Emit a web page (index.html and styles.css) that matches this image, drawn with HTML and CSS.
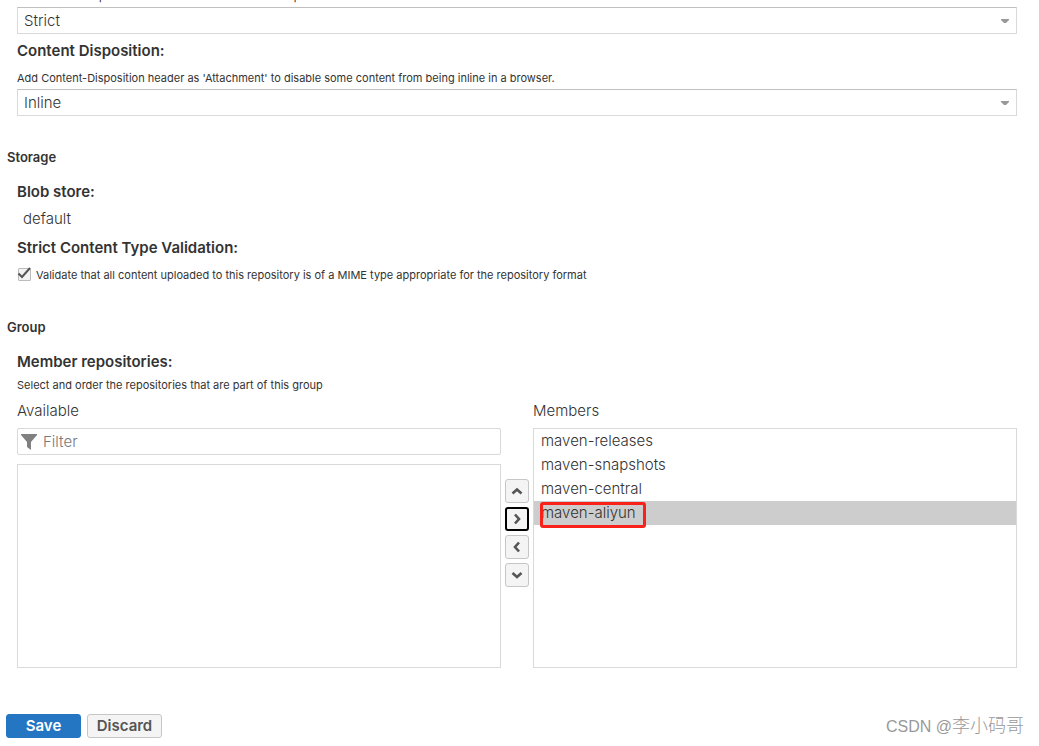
FILE: index.html
```html
<!DOCTYPE html>
<html lang="en">
<head>
<meta charset="utf-8">
<title>Repository settings</title>
<link rel="stylesheet" href="styles.css">
</head>
<body>
<form class="settings">
  <section class="group group-scrolled">
    <div class="fields">
      <p class="hint" id="layout-hint">Validate that all paths are maven artifact or metadata paths</p>
      <div class="combo">
        <select class="combo-input" aria-labelledby="layout-hint"><option>Strict</option></select>
        <svg class="combo-arrow" viewBox="0 0 8 4" aria-hidden="true"><path d="M0 0h8v1L5 4H3L0 1z"/></svg>
      </div>
      <label class="label" for="disposition">Content Disposition:</label>
      <p class="hint hint-spaced">Add Content-Disposition header as 'Attachment' to disable some content from being inline in a browser.</p>
      <div class="combo">
        <select class="combo-input" id="disposition"><option>Inline</option></select>
        <svg class="combo-arrow" viewBox="0 0 8 4" aria-hidden="true"><path d="M0 0h8v1L5 4H3L0 1z"/></svg>
      </div>
    </div>
  </section>

  <section class="group">
    <h2 class="title">Storage</h2>
    <div class="fields">
      <div class="label">Blob store:</div>
      <div class="value">default</div>
      <div class="label">Strict Content Type Validation:</div>
      <label class="check">
        <span class="check-box">
          <input class="check-input" type="checkbox" checked>
          <svg class="check-mark" viewBox="0 0 14 13" aria-hidden="true"><path d="M1.5 6.5L5 10L13 1"/></svg>
        </span>
        <span class="hint">Validate that all content uploaded to this repository is of a MIME type appropriate for the repository format</span>
      </label>
    </div>
  </section>

  <section class="group">
    <h2 class="title">Group</h2>
    <div class="fields">
      <div class="label">Member repositories:</div>
      <p class="hint hint-close">Select and order the repositories that are part of this group</p>
      <div class="picker">
        <div class="column">
          <label class="column-title" for="filter">Available</label>
          <div class="filter">
            <svg class="filter-icon" viewBox="0 0 16 16" aria-hidden="true"><path d="M0 0h16v1L10 8v8L6 13V8L0 1z"/></svg>
            <input class="filter-input" id="filter" type="text" placeholder="Filter">
          </div>
          <ul class="list list-available" role="listbox" aria-label="Available"></ul>
        </div>
        <div class="moves">
          <button class="move" type="button" aria-label="Move up"><svg viewBox="0 0 12 12" aria-hidden="true"><path d="M1.5 8.5L6 4.5l4.5 4"/></svg></button>
          <button class="move move-focused" type="button" aria-label="Add"><svg viewBox="0 0 12 12" aria-hidden="true"><path d="M4 1.5L8 6l-4 4.5"/></svg></button>
          <button class="move" type="button" aria-label="Remove"><svg viewBox="0 0 12 12" aria-hidden="true"><path d="M8 1.5L4 6l4 4.5"/></svg></button>
          <button class="move" type="button" aria-label="Move down"><svg viewBox="0 0 12 12" aria-hidden="true"><path d="M1.5 4L6 8l4.5-4"/></svg></button>
        </div>
        <div class="column">
          <div class="column-title" id="members-title">Members</div>
          <ul class="list list-members" role="listbox" aria-labelledby="members-title">
            <li class="item" role="option">maven-releases</li>
            <li class="item" role="option">maven-snapshots</li>
            <li class="item" role="option">maven-central</li>
            <li class="item item-selected" role="option" aria-selected="true">maven-aliyun<span class="marker"></span></li>
          </ul>
        </div>
      </div>
    </div>
  </section>

  <footer class="footer">
    <button class="button button-primary" type="submit">Save</button>
    <button class="button" type="button">Discard</button>
    <span class="watermark">CSDN @<span class="watermark-name" lang="zh">李小码哥</span></span>
  </footer>
</form>
</body>
</html>
```
FILE: styles.css
```css
* {
  box-sizing: border-box;
}

body {
  margin: 0;
  background: #fff;
  color: #333;
  font: 300 15px/20px Inter, "Liberation Sans", sans-serif;
}

button,
input,
select {
  font: inherit;
  color: inherit;
}

.settings {
  padding: 0 22px 0 7px;
}

.group {
  margin-bottom: 31px;
}

.group-scrolled {
  margin-top: -12px;
}

.fields {
  padding-left: 10px;
}

.title {
  margin: 0 0 15px;
  font-size: 13px;
  font-weight: 600;
  line-height: 20px;
}

.label {
  display: block;
  margin-top: 7px;
  font-weight: 600;
}

.title + .fields > .label:first-child {
  margin-top: 0;
}

.hint {
  margin: 0 0 3px;
  font-size: 11px;
  font-weight: 400;
  line-height: 16px;
}

.hint-spaced {
  margin-top: 9px;
}

.hint-close {
  margin: 5px 0 8px;
}

.value {
  margin: 7px 0 9px 6px;
}

.combo {
  position: relative;
}

.combo-input {
  display: block;
  width: 100%;
  height: 27px;
  padding: 0 24px 0 6px;
  appearance: none;
  border: 1px solid #d9d9d9;
  border-top-color: #c0c0c0;
  border-radius: 0;
  background: #fff;
}

.combo-arrow {
  position: absolute;
  top: 12px;
  right: 8px;
  width: 8px;
  height: 4px;
  fill: #999;
  pointer-events: none;
}

.check {
  display: flex;
  align-items: flex-start;
  gap: 5px;
  margin: 9px 0 34px;
}

.check .hint {
  margin: 0;
}

.check-box {
  display: grid;
  width: 14px;
  height: 14px;
}

.check-input,
.check-mark {
  grid-area: 1 / 1;
}

.check-input {
  width: 13px;
  height: 13px;
  margin: 1px 0 0 1px;
  appearance: none;
  border: 1px solid #bbb;
  border-radius: 1px;
  background: #f3f3f3;
}

.check-mark {
  z-index: 1;
  width: 14px;
  height: 13px;
  fill: none;
  stroke: #555;
  stroke-width: 2;
  pointer-events: none;
}

.picker {
  display: flex;
  gap: 4px;
}

.column {
  flex: 1;
}

.column-title {
  display: block;
  margin-bottom: 7px;
}

.filter {
  display: flex;
  align-items: center;
  gap: 6px;
  height: 27px;
  margin-bottom: 9px;
  padding-left: 3px;
  border: 1px solid #d9d9d9;
  border-radius: 2px;
}

.filter-icon {
  width: 16px;
  height: 16px;
  fill: #808080;
}

.filter-input {
  flex: 1;
  min-width: 0;
  padding: 0;
  border: 0;
  outline: 0;
  background: none;
}

.filter-input::placeholder {
  color: #777;
}

.list {
  margin: 0;
  padding: 0;
  border: 1px solid #d9d9d9;
  list-style: none;
}

.list-available {
  height: 204px;
}

.list-members {
  height: 240px;
}

.item {
  position: relative;
  padding: 2px 7px;
}

.item-selected {
  background: #cdcdcd;
}

.marker {
  position: absolute;
  top: 1px;
  left: 6px;
  width: 106px;
  height: 26px;
  border: 3px solid #f9221a;
  border-radius: 3px;
}

.moves {
  display: flex;
  flex-direction: column;
  justify-content: center;
  gap: 4px;
  padding-bottom: 4px;
}

.move {
  display: grid;
  place-items: center;
  width: 24px;
  height: 24px;
  padding: 0;
  border: 1px solid #c6c6c6;
  border-radius: 3px;
  background: #f4f4f4;
}

.move svg {
  width: 12px;
  height: 12px;
  fill: none;
  stroke: #555;
  stroke-width: 2.6;
}

.move-focused {
  border: 2px solid #000;
}

.footer {
  display: flex;
  align-items: center;
  gap: 6px;
  margin: 46px -7px 0 -1px;
}

.button {
  width: 75px;
  height: 24px;
  padding: 0;
  border: 1px solid #c6c6c6;
  border-radius: 3px;
  background: #f4f4f4;
  color: #555;
  font-weight: 600;
  line-height: 20px;
}

.button-primary {
  border-color: #2476c3;
  background: #2476c3;
  color: #fff;
}

.watermark {
  margin: 0 0 0 auto;
  color: #999;
  font: 300 16px/20px "Liberation Sans", "Noto Sans CJK SC", sans-serif;
}

.watermark-name {
  font-size: 18px;
}
```
